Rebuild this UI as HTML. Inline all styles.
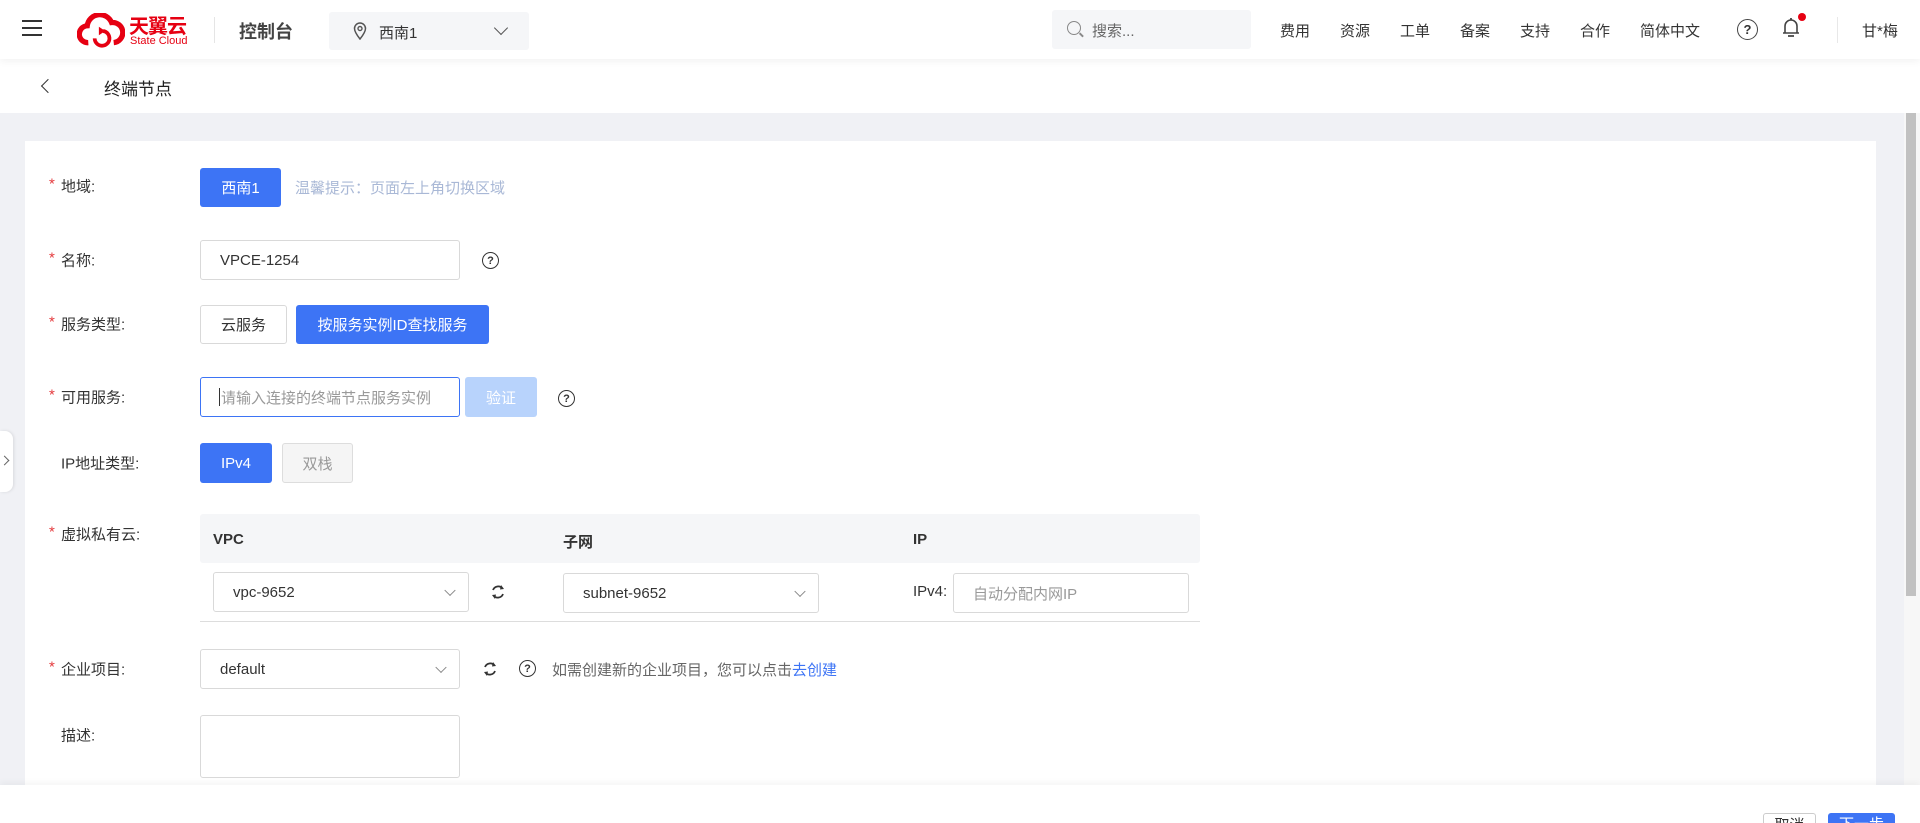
<!DOCTYPE html>
<html style="width:1920px;height:823px;overflow:hidden"><head><meta charset="utf-8"><style>
*{box-sizing:border-box;margin:0;padding:0}
body{width:1920px;height:823px;overflow:hidden;background:#f0f1f5;font-family:"Liberation Sans","Noto Sans CJK SC",sans-serif;font-size:15px;color:#333;position:relative}
.abs{position:absolute}
.hdr{left:0;top:0;width:1920px;height:59px;background:#fff;box-shadow:0 2px 8px rgba(0,0,0,.06);z-index:3}
.sub{left:0;top:59px;width:1920px;height:54px;background:#fff;z-index:2}
.card{left:25px;top:141px;width:1851px;height:660px;background:#fff}
.lbl{left:61px;font-size:15px;color:#333;transform:translateY(-50%)}
.lbl i{position:absolute;left:-12px;color:#e4393c;font-style:normal}
.btn{display:flex;align-items:center;justify-content:center;border-radius:3px;font-size:15px}
.blue{background:#3d74f5;color:#fff}
.inp{border:1px solid #d9d9d9;border-radius:3px;background:#fff;display:flex;align-items:center;padding-left:19px;font-size:15px}
.q{width:17px;height:17px;border:1.6px solid #333;border-radius:50%;font-size:11px;font-weight:bold;display:flex;align-items:center;justify-content:center;color:#333}
.chev{position:absolute;right:14px;top:50%;width:8px;height:8px;border-right:1.3px solid #888;border-bottom:1.3px solid #888;transform:translateY(-70%) rotate(45deg)}
.nav{top:20px;font-size:15px;color:#333}
</style></head><body>
<div class="abs hdr">
  <div class="abs" style="left:22px;top:20px;width:20px;height:2px;background:#333;box-shadow:0 7px 0 #333,0 14px 0 #333"></div>
  <svg class="abs" style="left:77px;top:13px" width="48" height="36" viewBox="0 0 44 34"><path d="M10 28 A8 8 0 0 1 9 12 A12 12 0 0 1 32 9 A9 9 0 0 1 34 28" fill="none" stroke="#e60012" stroke-width="5"/><path d="M16 24 A7 7 0 1 0 24 17" fill="none" stroke="#e60012" stroke-width="3.5"/><path d="M20 13 l6 4 -6 4z" fill="#e60012"/></svg>
  <div class="abs" style="left:129px;top:10px;color:#e60012;font-size:20px;font-weight:bold;letter-spacing:-1px">天翼云</div>
  <div class="abs" style="left:130px;top:35px;color:#e60012;font-size:11px">State Cloud</div>
  <div class="abs" style="left:214px;top:17px;width:1px;height:26px;background:#e5e5e5"></div>
  <div class="abs" style="left:239px;top:18px;font-size:18px;font-weight:bold;color:#444">控制台</div>
  <div class="abs" style="left:329px;top:12px;width:200px;height:38px;background:#f5f6f8;border-radius:3px">
    <svg class="abs" style="left:24px;top:10px" width="14" height="18" viewBox="0 0 14 18"><path d="M7 17 C3 12 1.5 9 1.5 6.5 A5.5 5.5 0 0 1 12.5 6.5 C12.5 9 11 12 7 17Z" fill="none" stroke="#555" stroke-width="1.5"/><circle cx="7" cy="6.5" r="2" fill="none" stroke="#555" stroke-width="1.4"/></svg>
    <div class="abs" style="left:50px;top:10px;font-size:15px">西南1</div>
    <div class="abs" style="left:167px;top:11px;width:10px;height:10px;border-right:1.5px solid #555;border-bottom:1.5px solid #555;transform:rotate(45deg)"></div>
  </div>
  <div class="abs" style="left:1052px;top:10px;width:199px;height:39px;background:#f5f6f8;border-radius:3px">
    <div class="abs" style="left:15px;top:11px;width:14px;height:14px;border:1.6px solid #888;border-radius:50%"></div>
    <div class="abs" style="left:27px;top:24px;width:5px;height:1.6px;background:#888;transform:rotate(45deg)"></div>
    <div class="abs" style="left:40px;top:10px;color:#666">搜索...</div>
  </div>
  <div class="abs nav" style="left:1280px">费用</div><div class="abs nav" style="left:1340px">资源</div><div class="abs nav" style="left:1400px">工单</div><div class="abs nav" style="left:1460px">备案</div><div class="abs nav" style="left:1520px">支持</div><div class="abs nav" style="left:1580px">合作</div><div class="abs nav" style="left:1640px">简体中文</div>
  <div class="abs q" style="left:1737px;top:19px;width:21px;height:21px;font-size:13px;border-color:#444">?</div>
  <svg class="abs" style="left:1782px;top:16px" width="18" height="24" viewBox="0 0 18 24"><path d="M3 17 V10 A6 6 0 0 1 15 10 V17 Z M1 17 H17" fill="none" stroke="#444" stroke-width="1.6"/><path d="M9 2 V4 M6 20 H12" stroke="#444" stroke-width="1.8"/></svg>
  <div class="abs" style="left:1798px;top:13px;width:8px;height:8px;border-radius:50%;background:#e60012"></div>
  <div class="abs" style="left:1837px;top:17px;width:1px;height:26px;background:#e8e8e8"></div>
  <div class="abs nav" style="left:1862px">甘*梅</div>
</div>
<div class="abs sub">
  <div class="abs" style="left:43px;top:22px;width:10px;height:10px;border-left:1.5px solid #333;border-bottom:1.5px solid #333;transform:rotate(45deg)"></div>
  <div class="abs" style="left:104px;top:16px;font-size:17px;color:#222">终端节点</div>
</div>
<div class="abs" style="left:1904px;top:113px;width:16px;height:672px;background:#f7f7f7"></div>
<div class="abs" style="left:1906px;top:113px;width:10px;height:483px;background:#c1c1c1"></div>
<div class="abs card"></div>
<div class="abs" style="left:0;top:431px;width:13px;height:61px;background:#fff;border-radius:0 8px 8px 0;box-shadow:1px 0 3px rgba(0,0,0,.1)"><div class="abs" style="left:1px;top:26px;width:7px;height:7px;border-right:1.3px solid #666;border-top:1.3px solid #666;transform:rotate(45deg)"></div></div>

<div class="abs lbl" style="top:186px"><i>*</i>地域:</div>
<div class="abs btn blue" style="left:200px;top:168px;width:81px;height:39px">西南1</div>
<div class="abs" style="left:295px;top:177px;color:#a9b8d6;font-size:15px">温馨提示：页面左上角切换区域</div>

<div class="abs lbl" style="top:260px"><i>*</i>名称:</div>
<div class="abs inp" style="left:200px;top:240px;width:260px;height:40px;color:#333">VPCE-1254</div>
<div class="abs q" style="left:482px;top:252px">?</div>

<div class="abs lbl" style="top:324px"><i>*</i>服务类型:</div>
<div class="abs btn" style="left:200px;top:305px;width:87px;height:39px;border:1px solid #d9d9d9;background:#fff">云服务</div>
<div class="abs btn blue" style="left:296px;top:305px;width:193px;height:39px">按服务实例ID查找服务</div>

<div class="abs lbl" style="top:397px"><i>*</i>可用服务:</div>
<div class="abs inp" style="left:200px;top:377px;width:260px;height:40px;border-color:#3d74f5;color:#999;padding-left:18px;overflow:hidden;white-space:nowrap"><span style="border-left:1px solid #333;height:18px;margin-right:1px"></span>请输入连接的终端节点服务实例</div>
<div class="abs btn" style="left:465px;top:377px;width:72px;height:40px;background:#b8d3fc;color:#fff">验证</div>
<div class="abs q" style="left:558px;top:390px">?</div>

<div class="abs lbl" style="top:463px">IP地址类型:</div>
<div class="abs btn blue" style="left:200px;top:443px;width:72px;height:40px">IPv4</div>
<div class="abs btn" style="left:282px;top:443px;width:71px;height:40px;background:#f5f5f5;border:1px solid #ddd;color:#999">双栈</div>

<div class="abs lbl" style="top:534px"><i>*</i>虚拟私有云:</div>
<div class="abs" style="left:200px;top:514px;width:1000px;height:49px;background:#f5f6f8;border-radius:3px"></div>
<div class="abs" style="left:213px;top:531px;font-weight:bold;font-size:15px">VPC</div>
<div class="abs" style="left:563px;top:531px;font-weight:bold;font-size:15px">子网</div>
<div class="abs" style="left:913px;top:531px;font-weight:bold;font-size:15px">IP</div>
<div class="abs inp" style="left:213px;top:572px;width:256px;height:40px">vpc-9652<span class="chev"></span></div>
<svg class="abs" style="left:490px;top:583px" width="16" height="18" viewBox="0 0 16 18"><path d="M3 7 A5.5 5.5 0 0 1 12.5 5.5 M13 11 A5.5 5.5 0 0 1 3.5 12.5" fill="none" stroke="#333" stroke-width="1.8"/><path d="M11 2 L14 6 L10 6.5Z M5 16 L2 12 L6 11.5Z" fill="#333"/></svg>
<div class="abs inp" style="left:563px;top:573px;width:256px;height:40px">subnet-9652<span class="chev"></span></div>
<div class="abs" style="left:913px;top:583px">IPv4:</div>
<div class="abs inp" style="left:953px;top:573px;width:236px;height:40px;color:#999">自动分配内网IP</div>
<div class="abs" style="left:200px;top:621px;width:1000px;height:1px;background:#ddd"></div>

<div class="abs lbl" style="top:669px"><i>*</i>企业项目:</div>
<div class="abs inp" style="left:200px;top:649px;width:260px;height:40px">default<span class="chev"></span></div>
<svg class="abs" style="left:482px;top:660px" width="16" height="18" viewBox="0 0 16 18"><path d="M3 7 A5.5 5.5 0 0 1 12.5 5.5 M13 11 A5.5 5.5 0 0 1 3.5 12.5" fill="none" stroke="#333" stroke-width="1.8"/><path d="M11 2 L14 6 L10 6.5Z M5 16 L2 12 L6 11.5Z" fill="#333"/></svg>
<div class="abs q" style="left:519px;top:660px">?</div>
<div class="abs" style="left:552px;top:659px;color:#666">如需创建新的企业项目，您可以点击<span style="color:#3d74f5">去创建</span></div>

<div class="abs lbl" style="top:735px">描述:</div>
<div class="abs" style="left:200px;top:715px;width:260px;height:63px;border:1px solid #d9d9d9;border-radius:3px;background:#fff"></div>

<div class="abs" style="left:0;top:785px;width:1920px;height:38px;background:#fff;box-shadow:0 -3px 6px rgba(0,0,0,.04)"></div>
<div class="abs btn" style="left:1763px;top:813px;width:53px;height:10px;border:1px solid #ccc;border-bottom:none;border-radius:3px 3px 0 0;background:#fff;overflow:hidden;align-items:flex-start;padding-top:3px;font-size:15px;line-height:18px">取消</div>
<div class="abs btn blue" style="left:1828px;top:813px;width:67px;height:10px;border-radius:3px 3px 0 0;overflow:hidden;align-items:flex-start;padding-top:3px;line-height:18px">下一步</div>
</body></html>
